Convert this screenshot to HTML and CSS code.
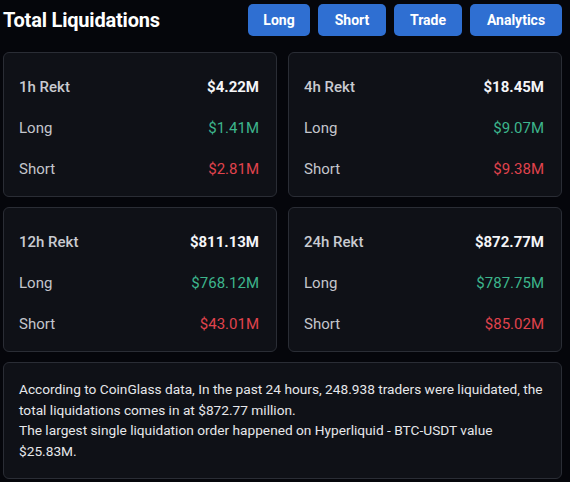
FILE: index.html
```html
<!DOCTYPE html>
<html>
<head>
<meta charset="utf-8">
<link rel="stylesheet" href="styles.css">
</head>
<body>
<div class="page">
  <header class="header">
    <h1 class="title">Total Liquidations</h1>
    <nav class="actions">
      <button class="btn">Long</button>
      <button class="btn">Short</button>
      <button class="btn">Trade</button>
      <button class="btn">Analytics</button>
    </nav>
  </header>
  <section class="grid">
    <div class="card">
      <div class="row head"><span>1h Rekt</span><span class="total">$4.22M</span></div>
      <div class="row"><span>Long</span><span class="up">$1.41M</span></div>
      <div class="row"><span>Short</span><span class="down">$2.81M</span></div>
    </div>
    <div class="card">
      <div class="row head"><span>4h Rekt</span><span class="total">$18.45M</span></div>
      <div class="row"><span>Long</span><span class="up">$9.07M</span></div>
      <div class="row"><span>Short</span><span class="down">$9.38M</span></div>
    </div>
    <div class="card">
      <div class="row head"><span>12h Rekt</span><span class="total">$811.13M</span></div>
      <div class="row"><span>Long</span><span class="up">$768.12M</span></div>
      <div class="row"><span>Short</span><span class="down">$43.01M</span></div>
    </div>
    <div class="card">
      <div class="row head"><span>24h Rekt</span><span class="total">$872.77M</span></div>
      <div class="row"><span>Long</span><span class="up">$787.75M</span></div>
      <div class="row"><span>Short</span><span class="down">$85.02M</span></div>
    </div>
  </section>
  <section class="summary">
    <p>According to CoinGlass data, In the past 24 hours, 248.938 traders were liquidated, the total liquidations comes in at $872.77 million.</p>
    <p>The largest single liquidation order happened on Hyperliquid - BTC-USDT value $25.83M.</p>
  </section>
</div>
</body>
</html>
```
FILE: styles.css
```css
html, body {
  margin: 0;
  padding: 0;
  background: #05060b;
}
body {
  font-family: Roboto, "Liberation Sans", sans-serif;
  color: #c9cbd1;
  width: 570px;
  height: 482px;
  overflow: hidden;
}
.page {
  padding: 4px 8px 0 3px;
}
.header {
  display: flex;
  align-items: center;
  justify-content: space-between;
  height: 32px;
}
.title {
  margin: 0;
  font-size: 20px;
  font-weight: 700;
  color: #ffffff;
  letter-spacing: -0.2px;
}
.actions {
  display: flex;
  gap: 8px;
}
.btn {
  height: 32px;
  border: none;
  border-radius: 5px;
  background: #2f6fd2;
  color: #ffffff;
  font-family: inherit;
  font-size: 14px;
  font-weight: 700;
  padding: 0;
}
.btn:nth-child(1) { width: 62px; }
.btn:nth-child(2) { width: 68px; }
.btn:nth-child(3) { width: 68px; }
.btn:nth-child(4) { width: 92px; }
.grid {
  display: grid;
  grid-template-columns: 274px 274px;
  column-gap: 11px;
  row-gap: 10px;
  margin-top: 16px;
}
.card {
  height: 145px;
  box-sizing: border-box;
  background: #0f1117;
  border: 1px solid #2a2d35;
  border-radius: 6px;
  padding: 13px 17px 0 15px;
}
.row {
  height: 41px;
  display: flex;
  align-items: center;
  justify-content: space-between;
  font-size: 15px;
  color: #c4c6cc;
}
.row.head span:first-child {
  font-weight: 500;
  color: #c9cbd1;
}
.total {
  color: #f4f5f7;
  font-weight: 700;
}
.up { color: #3db58c; }
.down { color: #e0434d; }
.summary {
  margin-top: 10px;
  height: 117px;
  box-sizing: border-box;
  background: #0f1117;
  border: 1px solid #2a2d35;
  border-radius: 6px;
  padding: 16px 8px 0 15px;
  font-size: 13.7px;
  line-height: 20.5px;
  color: #e6e7ea;
}
.summary p {
  margin: 0;
}
```
